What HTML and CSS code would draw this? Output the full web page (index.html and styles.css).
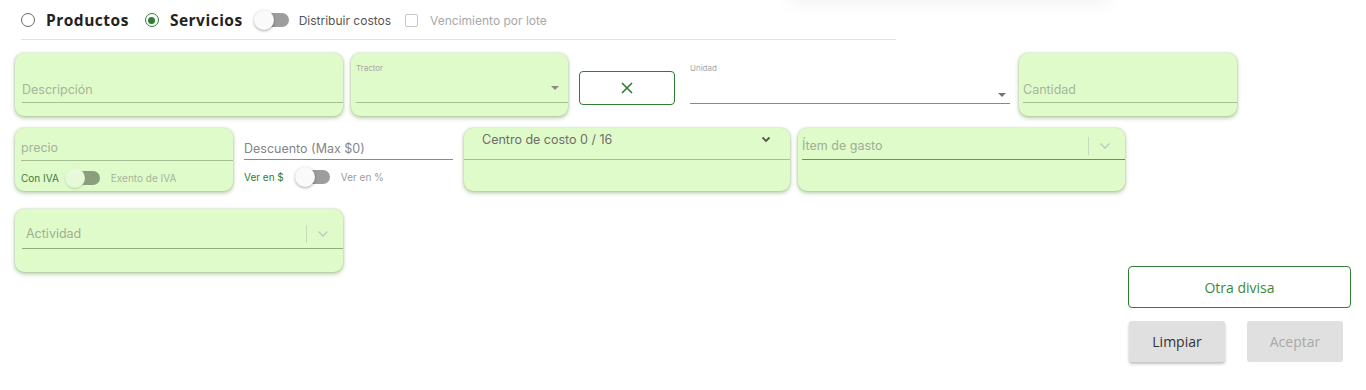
FILE: index.html
```html
<!DOCTYPE html>
<html lang="es">
<head>
    <meta charset="UTF-8">
    <meta name="viewport" content="width=device-width, initial-scale=1.0">
    <title>Servicio</title>
    <link rel="stylesheet" href="styles.css">
</head>
<body>
    <div class="top-shadow"></div>
    <div class="type-bar">
        <label class="radio"><span class="radio-dot"></span>Productos</label>
        <label class="radio checked"><span class="radio-dot"></span>Servicios</label>
        <span class="switch"><span class="knob"></span></span>
        <span class="small-label">Distribuir costos</span>
        <span class="check-box"></span>
        <span class="small-label muted">Vencimiento por lote</span>
    </div>

    <div class="row row-one">
        <div class="card w-desc">
            <div class="field field-bottom"><span class="placeholder">Descripción</span></div>
        </div>
        <div class="card w-tractor">
            <span class="mini-label">Tractor</span>
            <div class="field field-bottom select-field"><span class="placeholder"></span><span class="caret"></span></div>
        </div>
        <button class="btn-outline btn-x" type="button">
            <svg width="12" height="12" viewBox="0 0 12 12"><path d="M1 1L11 11M11 1L1 11" stroke="#2e7d32" stroke-width="1.6" fill="none"/></svg>
        </button>
        <div class="plain-select">
            <span class="mini-label">Unidad</span>
            <div class="plain-line"><span class="caret dark"></span></div>
        </div>
        <div class="card w-qty">
            <div class="field field-bottom"><span class="placeholder">Cantidad</span></div>
        </div>
    </div>

    <div class="row row-two">
        <div class="card w-price">
            <div class="field field-top"><span class="placeholder">precio</span></div>
            <div class="toggle-line">
                <span class="green-text">Con IVA</span>
                <span class="switch"><span class="knob"></span></span>
                <span class="muted-text">Exento de IVA</span>
            </div>
        </div>
        <div class="discount">
            <div class="plain-input"><span>Descuento (Max $0)</span></div>
            <div class="toggle-line">
                <span class="green-text">Ver en $</span>
                <span class="switch"><span class="knob"></span></span>
                <span class="muted-text">Ver en %</span>
            </div>
        </div>
        <div class="card w-center">
            <div class="center-field">
                <span class="dark-text">Centro de costo 0 / 16</span>
                <svg width="10" height="7" viewBox="0 0 10 7"><path d="M1.5 1.5L5 5L8.5 1.5" stroke="#555" stroke-width="1.8" fill="none"/></svg>
            </div>
        </div>
        <div class="card w-item">
            <div class="combo">
                <span class="placeholder">Ítem de gasto</span>
                <span class="sep"></span>
                <svg class="chev" width="12" height="8" viewBox="0 0 12 8"><path d="M1.5 1.5L6 6L10.5 1.5" stroke="#c4c4c4" stroke-width="1.3" fill="none"/></svg>
            </div>
        </div>
    </div>

    <div class="row row-three">
        <div class="card w-desc activity">
            <div class="combo">
                <span class="placeholder">Actividad</span>
                <span class="sep"></span>
                <svg class="chev" width="12" height="8" viewBox="0 0 12 8"><path d="M1.5 1.5L6 6L10.5 1.5" stroke="#c4c4c4" stroke-width="1.3" fill="none"/></svg>
            </div>
        </div>
        <div class="actions">
            <button class="btn-outline btn-wide" type="button">Otra divisa</button>
            <div class="action-pair">
                <button class="btn-grey" type="button">Limpiar</button>
                <button class="btn-grey disabled" type="button" disabled>Aceptar</button>
            </div>
        </div>
    </div>
</body>
</html>
```

FILE: styles.css
```css
body {
    margin: 0;
    font-family: "Open Sans", sans-serif;
    background: #fff;
    color: #222;
    height: 390px;
    overflow: hidden;
    position: relative;
}
.top-shadow {
    position: absolute;
    left: 790px;
    top: -30px;
    width: 320px;
    height: 30px;
    box-shadow: 0 4px 18px rgba(0, 0, 0, 0.05);
}
.type-bar {
    display: flex;
    align-items: center;
    margin: 0 470px 0 21px;
    height: 40px;
    border-bottom: 1px solid #e2e2e2;
    padding-top: 1px;
    box-sizing: border-box;
}
.radio {
    display: flex;
    align-items: center;
    font-weight: 700;
    font-size: 15.5px;
    color: #222;
    letter-spacing: 0.5px;
    margin-right: 16px;
}
.radio-dot {
    width: 12px;
    height: 12px;
    border: 1.5px solid #666;
    border-radius: 50%;
    margin-right: 11px;
    position: relative;
}
.radio.checked .radio-dot {
    border-color: #2e7d32;
}
.radio.checked .radio-dot::after {
    content: "";
    position: absolute;
    left: 2.5px;
    top: 2.5px;
    width: 7px;
    height: 7px;
    border-radius: 50%;
    background: #2e7d32;
}
.radio.checked {
    margin-right: 12px;
}
.switch {
    display: inline-block;
    position: relative;
    width: 34px;
    height: 14px;
    background: #9d9d9d;
    border-radius: 7px;
    margin-right: 10px;
}
.knob {
    position: absolute;
    left: -1px;
    top: -3px;
    width: 20px;
    height: 20px;
    border-radius: 50%;
    background: #fafafa;
    box-shadow: 0 1px 3px rgba(0, 0, 0, 0.35);
}
.small-label {
    font-family: "Inter", sans-serif;
    font-size: 12px;
    color: #555;
    margin-right: 14px;
}
.small-label.muted {
    color: #a8a8a8;
}
.check-box {
    width: 11px;
    height: 11px;
    border: 1.5px solid #c6c6c6;
    border-radius: 2px;
    margin-right: 12px;
}

.row {
    display: flex;
    align-items: flex-start;
    padding-left: 15px;
}
.row-one {
    margin-top: 13px;
}
.row-two {
    margin-top: 12px;
}
.row-three {
    margin-top: 18px;
    justify-content: space-between;
    padding-right: 15px;
}
.card {
    background: #e0fbca;
    border-radius: 9px;
    box-shadow: 0 2px 4px rgba(90, 140, 60, 0.45), 0 0 2px rgba(120, 170, 90, 0.5);
    height: 63px;
    box-sizing: border-box;
    display: flex;
    flex-direction: column;
    position: relative;
}
.w-desc { width: 328px; }
.w-tractor { width: 217px; margin-left: 8px; }
.w-qty { width: 218px; margin-left: 9px; }
.w-price { width: 218px; }
.w-center { width: 326px; margin-left: 11px; }
.w-item { width: 327px; margin-left: 8px; }

.placeholder {
    font-family: "Inter", sans-serif;
    font-size: 12.5px;
    color: #a6b49c;
}
.field {
    margin-left: 7px;
    border-bottom: 1.5px solid #a4bf92;
    display: flex;
    align-items: center;
}
.field-bottom {
    margin-top: auto;
    margin-bottom: 13px;
    padding-bottom: 5px;
}
.w-qty .field { margin-left: 4px; }
.w-tractor .field { margin-left: 5px; }
.mini-label {
    font-family: "Inter", sans-serif;
    font-size: 8px;
    color: #a6a6a6;
    margin: 10px 0 0 5px;
}
.select-field {
    justify-content: space-between;
    height: 18px;
}
.caret {
    width: 0;
    height: 0;
    border-left: 4px solid transparent;
    border-right: 4px solid transparent;
    border-top: 4px solid #8a8a8a;
    margin-right: 9px;
}
.caret.dark {
    border-top-color: #757575;
    margin-right: 4px;
}
.btn-outline {
    background: #fff;
    border: 1.5px solid #2e7d32;
    border-radius: 4px;
    color: #2e7d32;
    cursor: pointer;
    font-family: "Open Sans", sans-serif;
}
.btn-x {
    width: 96px;
    height: 34px;
    margin: 18px 0 0 11px;
    display: flex;
    align-items: center;
    justify-content: center;
}
.plain-select {
    width: 320px;
    margin-left: 15px;
    display: flex;
    flex-direction: column;
}
.plain-select .mini-label {
    margin: 10px 0 0 0;
}
.plain-line {
    margin-top: 13px;
    height: 17px;
    border-bottom: 1px solid #8a8a8a;
    display: flex;
    justify-content: flex-end;
    align-items: center;
}

.field-top {
    margin-top: 10px;
    padding-bottom: 4px;
    height: 18px;
    margin-left: 6px;
}
.toggle-line {
    display: flex;
    align-items: center;
    margin-top: 10px;
    font-family: "Inter", sans-serif;
    font-size: 10px;
}
.w-price .toggle-line {
    margin-left: 6px;
}
.toggle-line .switch {
    margin-left: 12px;
    margin-right: 11px;
}
.w-price .toggle-line .switch {
    margin-left: 7px;
    background: #8aa07d;
}
.w-price .toggle-line .knob {
    background: #e8f9da;
    box-shadow: 0 1px 2px rgba(90, 120, 70, 0.3);
}
.green-text {
    color: #2e7d32;
}
.w-price .green-text {
    color: #3f7a3f;
}
.muted-text {
    color: #9c9c9c;
}
.w-price .muted-text {
    color: #a4b49a;
}
.discount {
    width: 209px;
    margin-left: 11px;
    display: flex;
    flex-direction: column;
}
.plain-input {
    margin-top: 10px;
    height: 21px;
    border-bottom: 1px solid #8a8a8a;
    font-family: "Inter", sans-serif;
    font-size: 12.5px;
    color: #858585;
    display: flex;
    align-items: center;
}
.discount .toggle-line {
    margin-top: 10px;
}
.center-field {
    padding: 4px 19px 12px 18px;
    border-bottom: 1.5px solid #a4bf92;
    display: flex;
    justify-content: space-between;
    align-items: center;
}
.dark-text {
    font-family: "Inter", sans-serif;
    font-size: 12.5px;
    color: #6d6d6d;
}
.combo {
    display: flex;
    align-items: center;
    border-bottom: 1.5px solid #8fae78;
    height: 32px;
    padding-top: 4px;
    box-sizing: border-box;
    padding-left: 4px;
}
.w-item .combo {
    margin-left: 4px;
    padding-left: 0;
    border-bottom-color: #6f9158;
    padding-top: 4px;
}
.combo .placeholder {
    flex: 1;
    color: #9fae94;
}
.sep {
    width: 1px;
    height: 18px;
    background: #c9d9bd;
    margin-right: 10px;
}
.chev {
    margin-right: 14px;
}
.activity .combo {
    margin-left: 7px;
    height: 40px;
    padding-top: 10px;
}

.actions {
    display: flex;
    flex-direction: column;
    align-items: flex-end;
    padding-top: 57px;
}
.btn-wide {
    width: 223px;
    height: 42px;
    font-size: 14px;
    color: #3a8a3a;
}
.action-pair {
    display: flex;
    gap: 22px;
    margin-top: 13px;
    margin-right: 8px;
}
.btn-grey {
    width: 96px;
    height: 41px;
    border: none;
    border-radius: 3px;
    background: #e0e0e0;
    color: #333;
    font-family: "Open Sans", sans-serif;
    font-size: 14px;
    box-shadow: 0 2px 3px rgba(0, 0, 0, 0.25);
    cursor: pointer;
}
.btn-grey.disabled {
    color: #a8a8a8;
    box-shadow: none;
    cursor: default;
}
```
